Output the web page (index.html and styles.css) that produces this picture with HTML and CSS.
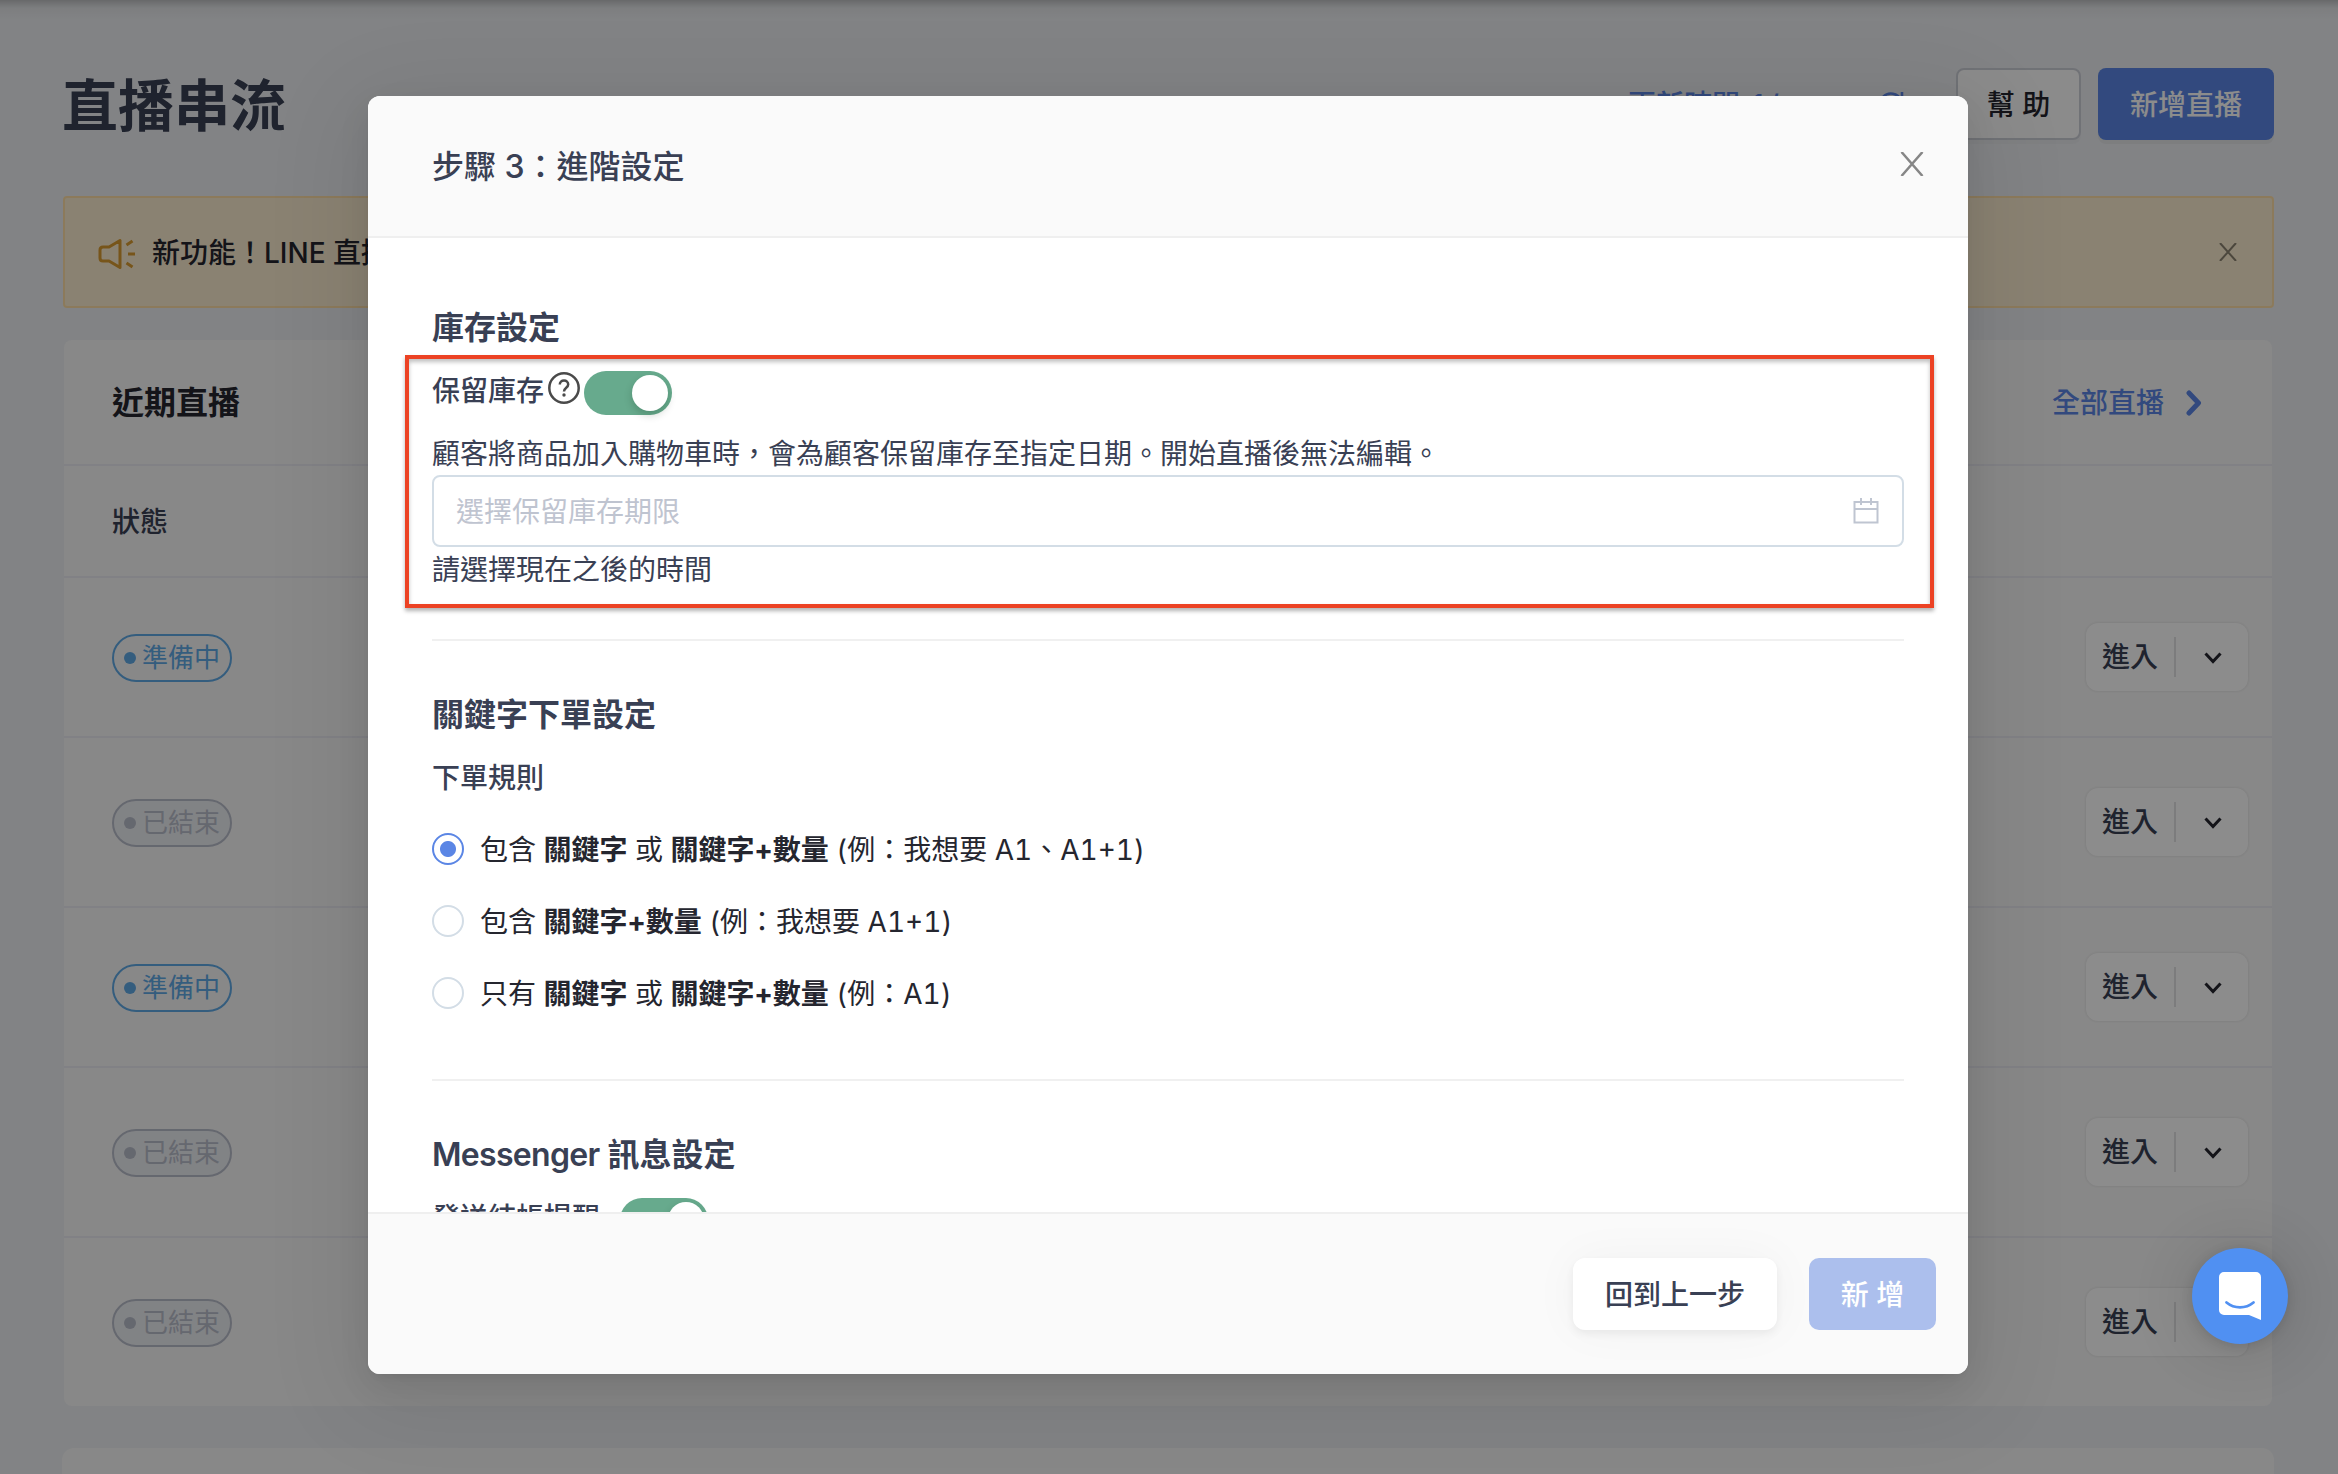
FILE: index.html
```html
<!DOCTYPE html>
<html lang="zh-Hant">
<head>
<meta charset="utf-8">
<title>直播串流</title>
<link rel="stylesheet" href="styles.css">
</head>
<body>
<main class="page">
  <header class="page-head">
    <h1>直播串流</h1>
    <div class="head-actions">
      <a class="refresh"><span>更新時間</span><span class="date">1/</span>
        <svg width="26" height="26" viewBox="0 0 26 26" fill="none" stroke="currentColor" stroke-width="2.6"><path d="M23 9A11 11 0 1 0 24 14M24 1v8h-8"/></svg>
      </a>
      <button class="btn help">幫 助</button>
      <button class="btn primary">新增直播</button>
    </div>
  </header>
  <section class="notice">
    <svg class="horn" width="38" height="32" viewBox="0 0 38 32" fill="none" stroke="currentColor" stroke-width="3"><path d="M22 2.500V29.500L11 23H5Q2 23 2 20V12Q2 9 5 9H11Z" stroke-linejoin="round"/><path d="M30 16h7M28.500 7l6-4M28.500 25l6 4"/></svg>
    <span class="notice-text">新功能！LINE 直播</span>
    <svg class="notice-x" width="18" height="18" viewBox="0 0 18 18" fill="none" stroke="currentColor" stroke-width="2"><path d="M1 0l16 18M17 0L1 18"/></svg>
  </section>
  <section class="card">
    <div class="card-head">
      <h2>近期直播</h2>
      <a class="all"><span>全部直播</span><svg width="16" height="26" viewBox="0 0 16 26" fill="none" stroke="currentColor" stroke-width="5" stroke-linecap="round" stroke-linejoin="round"><path d="M3 3l9.500 10L3 23"/></svg></a>
    </div>
    <div class="thead">狀態</div>
    <div class="row"><span class="tag ready"><i></i>準備中</span><div class="enter"><span>進入</span><b></b><svg width="18" height="12" viewBox="0 0 18 12"><path d="M1.500 1.500L9 9.500l7.500-8"/></svg></div></div>
    <div class="row tall"><span class="tag done"><i></i>已結束</span><div class="enter"><span>進入</span><b></b><svg width="18" height="12" viewBox="0 0 18 12"><path d="M1.500 1.500L9 9.500l7.500-8"/></svg></div></div>
    <div class="row"><span class="tag ready"><i></i>準備中</span><div class="enter"><span>進入</span><b></b><svg width="18" height="12" viewBox="0 0 18 12"><path d="M1.500 1.500L9 9.500l7.500-8"/></svg></div></div>
    <div class="row tall"><span class="tag done"><i></i>已結束</span><div class="enter"><span>進入</span><b></b><svg width="18" height="12" viewBox="0 0 18 12"><path d="M1.500 1.500L9 9.500l7.500-8"/></svg></div></div>
    <div class="row last"><span class="tag done"><i></i>已結束</span><div class="enter"><span>進入</span><b></b></div></div>
  </section>
  <section class="card next"></section>
</main>

<div class="mask">
  <div class="modal" role="dialog">
    <header class="modal-head">
      <h2>步驟 3：進階設定</h2>
      <svg width="24" height="24" viewBox="0 0 24 24" fill="none" stroke="#868686" stroke-width="2.500"><path d="M1.500 0l21 24M22.500 0l-21 24"/></svg>
    </header>
    <div class="modal-body">
      <section class="block stock">
        <h3>庫存設定</h3>
        <div class="keep">
          <label>保留庫存</label>
          <svg class="q" width="32" height="32" viewBox="0 0 32 32" fill="none" stroke="#4a4a4a" stroke-width="2.500"><circle cx="16" cy="16" r="14.700"/><path d="M11.800 12.600c0-2.400 1.800-4 4.200-4s4.200 1.600 4.200 3.800c0 3.300-4.200 3.300-4.200 7"/><circle cx="16" cy="23" r="1.700" fill="#4a4a4a" stroke="none"/></svg>
          <span class="switch"></span>
        </div>
        <p class="desc">顧客將商品加入購物車時，會為顧客保留庫存至指定日期。開始直播後無法編輯。</p>
        <div class="input">
          <span>選擇保留庫存期限</span>
          <svg width="26" height="26" viewBox="0 0 26 26" fill="none" stroke="#bfc5d1" stroke-width="2"><path d="M1.500 4h23v20.500h-23zM1.500 11h23M8 0v7M18 0v7"/></svg>
        </div>
        <p class="hint">請選擇現在之後的時間</p>
        <div class="callout"></div>
      </section>
      <section class="block rules">
        <h3>關鍵字下單設定</h3>
        <p class="label">下單規則</p>
        <label class="radio on"><i></i><span>包含 <strong>關鍵字</strong> 或 <strong>關鍵字+數量</strong> (例：我想要 A1、A1+1)</span></label>
        <label class="radio"><i></i><span>包含 <strong>關鍵字+數量</strong> (例：我想要 A1+1)</span></label>
        <label class="radio"><i></i><span>只有 <strong>關鍵字</strong> 或 <strong>關鍵字+數量</strong> (例：A1)</span></label>
      </section>
      <section class="block messenger">
        <h3><span class="latin">Messenger</span> 訊息設定</h3>
        <div class="remind"><label>發送結帳提醒</label><span class="switch"></span></div>
      </section>
    </div>
    <footer class="modal-foot">
      <button class="btn back">回到上一步</button>
      <button class="btn add">新 增</button>
    </footer>
  </div>
</div>

<div class="chat">
  <svg width="42" height="48" viewBox="0 0 42 48"><path d="M5 0h32a5 5 0 0 1 5 5v43L30 43H5a5 5 0 0 1-5-5V5a5 5 0 0 1 5-5z" fill="#fff"/><path d="M7.500 30.500c8 6.500 19 6.500 27 0" fill="none" stroke="#5090f2" stroke-width="2.800" stroke-linecap="round"/></svg>
</div>
</body>
</html>
```
FILE: styles.css
```css
* { box-sizing: border-box; }
body {
  margin: 0;
  width: 2338px;
  height: 1474px;
  overflow: hidden;
  position: relative;
  background: #edeff2;
  font: 28px/44px Inter, "Noto Sans CJK TC", sans-serif;
  color: #394054;
}
h1, h2, h3, p { margin: 0; }
svg { display: block; flex: none; }
.btn {
  height: 72px;
  padding: 2px 0 0;
  border: 0;
  font: inherit;
  font-weight: 500;
  color: inherit;
  white-space: pre;
}

.page { height: 1474px; overflow: hidden; padding: 0 64px; }
.page::before { content: ""; display: block; height: 20px; margin: 0 -64px 48px; background: linear-gradient(rgba(0, 0, 0, .2), rgba(0, 0, 0, .04) 40%, transparent); }
.page-head { height: 128px; display: flex; justify-content: space-between; align-items: flex-start; }
h1 { margin-left: -2px; font-size: 56px; line-height: 76px; font-weight: 600; }
.head-actions { display: flex; align-items: flex-start; }
.refresh { display: flex; align-items: center; margin-top: 15px; margin-right: 52px; color: #5b86e5; font-weight: 500; }
.refresh svg { margin-top: -3px; }
.date { width: 126px; margin: 0 0 0 12px; letter-spacing: 5px; }
.help { width: 125px; margin-right: 17px; border: 2px solid #cdcfd8; border-radius: 8px; background: #fdfdfd; color: #25262f; box-shadow: 0 4px 0 rgba(0, 0, 0, .02); }
.primary { width: 176px; border-radius: 8px; background: #5b86e5; color: #fff; box-shadow: 0 4px 0 rgba(0, 0, 0, .04); }

.notice {
  height: 112px;
  margin: 0 0 32px -1px;
  padding: 0 35px 0 33px;
  display: flex;
  align-items: center;
  border: 2px solid #ffdfa6;
  border-radius: 4px;
  background: #fcedd0;
  color: #25262f;
}
.horn { color: #d99b30; margin-top: 4px; }
.notice-text { flex: 1; margin: 1px 0 0 16px; font-weight: 500; }
.notice-x { color: #8a8270; }

.card { width: 2208px; background: #f8f8f8; border-radius: 8px; }
.card-head { height: 126px; padding: 2px 70px 0 48px; display: flex; align-items: center; justify-content: space-between; border-bottom: 2px solid #ececf3; }
.card-head h2 { font-size: 32px; font-weight: 600; color: #25262f; }
.all { display: flex; align-items: center; gap: 22px; color: #5b86e5; font-weight: 500; }
.thead { height: 112px; padding: 0 48px; line-height: 112px; font-weight: 500; border-bottom: 2px solid #ececf3; }
.row { height: 160px; padding: 0 24px 0 48px; display: flex; align-items: center; justify-content: space-between; border-bottom: 2px solid #ececf3; }
.row.tall { height: 170px; }
.row.last { height: 168px; border: 0; }
.tag { width: 120px; height: 48px; margin-top: 2px; padding-left: 10px; display: flex; align-items: center; gap: 6px; border: 2px solid; border-radius: 24px; font-size: 26px; white-space: nowrap; line-height: 46px; }
.tag i { width: 12px; height: 12px; border-radius: 50%; background: currentColor; }
.ready { color: #60a9e6; }
.done { color: #b9bdcb; background: #eceef2; }
.enter { width: 162px; height: 68px; padding: 0 0 0 16px; display: flex; align-items: center; border-radius: 12px; background: #fff; box-shadow: 0 0 3px rgba(0, 0, 0, .12); font-weight: 500; white-space: nowrap; }
.enter b { width: 2px; height: 40px; margin: 0 28px 0 16px; background: #e2e2e4; }
.enter svg { fill: none; stroke: #25262f; stroke-width: 3; margin-top: 2px; }
.next { width: 2212px; height: 60px; margin: 42px -2px 0; border-radius: 12px; }

.mask { position: absolute; inset: 0; padding: 96px 0 0 368px; background: rgba(0, 0, 0, .45); }
.modal {
  width: 1600px;
  height: 1278px;
  display: flex;
  flex-direction: column;
  overflow: hidden;
  border-radius: 12px;
  background: #fff;
  box-shadow: 0 6px 12px -8px rgba(0, 0, 0, .12), 0 12px 32px rgba(0, 0, 0, .08), 0 18px 96px 16px rgba(0, 0, 0, .08);
}
.modal-head { height: 142px; flex: none; padding: 0 44px 0 64px; display: flex; align-items: center; justify-content: space-between; border-bottom: 2px solid #efefef; background: #fafafa; }
.modal-head h2 { padding-top: 2px; font-size: 32px; font-weight: 500; }
.modal-head svg { margin-top: -5px; }
.modal-body { flex: 1; overflow: hidden; padding: 0 64px; }
h3 { font-size: 32px; line-height: 48px; font-weight: 600; }
.latin { letter-spacing: -.7px; }
.block { position: relative; border-bottom: 2px solid #f0f0f0; }
.stock { height: 403px; padding-top: 66px; }
.keep { display: flex; height: 60px; align-items: flex-start; padding-top: 17px; font-weight: 500; }
.q { margin: 3px 4px 0; }
.keep .switch { margin-top: 2px; }
.keep label { line-height: 44px; }
.switch { width: 88px; height: 44px; padding: 4px; flex: none; display: flex; justify-content: flex-end; border-radius: 22px; background: #67aa8d; }
.switch::after { content: ""; width: 36px; height: 36px; border-radius: 50%; background: #fff; box-shadow: 0 4px 8px rgba(0, 35, 11, .2); }
.desc { margin-top: 18px; line-height: 48px; height: 45px; }
.input { height: 72px; padding: 0 23px 0 22px; display: flex; align-items: center; justify-content: space-between; border: 2px solid #d3dde6; border-radius: 8px; color: #bfc4d0; }
.input span { padding-top: 2px; }
.hint { padding-top: 1px; }
.callout { position: absolute; left: -27px; top: 117px; width: 1529px; height: 253px; border: 4px solid #ec4224; box-shadow: 0 3px 4px rgba(0, 0, 0, .3), inset 0 3px 4px rgba(0, 0, 0, .25); }
.rules { height: 440px; padding-top: 50px; }
.label { margin: 17px 0 27px; line-height: 44px; font-weight: 500; }
.radio { display: flex; align-items: center; height: 44px; margin-bottom: 28px; color: #25262f; }
.radio i { width: 32px; height: 32px; margin-right: 16px; border: 2px solid #d3dde6; border-radius: 50%; }
.radio span { padding-top: 1px; font-variant-numeric: tabular-nums; font-kerning: none; }
.radio.on i { border-color: #5b86e5; background: radial-gradient(circle, #5b86e5 7.500px, #fff 8.500px); }
.radio strong { font-weight: 700; }
.messenger { padding-top: 50px; border: 0; }
.remind { display: flex; gap: 20px; margin-top: 19px; font-weight: 500; }
.remind label { line-height: 40px; }
.modal-foot { height: 162px; flex: none; padding: 44px 32px 0; display: flex; justify-content: flex-end; gap: 32px; border-top: 2px solid #efefef; background: #fafafa; }
.back { width: 204px; border-radius: 12px; background: #fff; box-shadow: 0 4px 8px rgba(0, 0, 0, .06), 0 0 48px rgba(0, 0, 0, .04); }
.add { width: 127px; border-radius: 10px; background: #acbfed; color: #fff; }

.chat { position: absolute; left: 2192px; top: 1248px; width: 96px; height: 96px; display: flex; align-items: center; justify-content: center; border-radius: 50%; background: #5090f2; box-shadow: 0 2px 12px rgba(0, 0, 0, .12), 0 4px 64px rgba(0, 0, 0, .16); }
```
